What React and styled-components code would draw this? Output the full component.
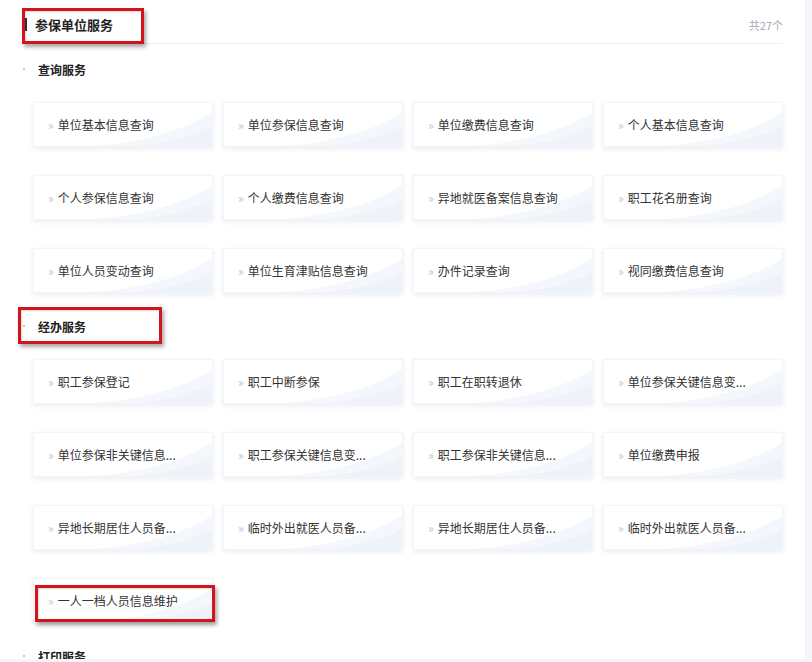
import React from 'react';
import styled, { createGlobalStyle } from 'styled-components';

const sections = [
  {
    title: '查询服务',
    items: [
      '单位基本信息查询', '单位参保信息查询', '单位缴费信息查询', '个人基本信息查询',
      '个人参保信息查询', '个人缴费信息查询', '异地就医备案信息查询', '职工花名册查询',
      '单位人员变动查询', '单位生育津贴信息查询', '办件记录查询', '视同缴费信息查询',
    ],
  },
  {
    title: '经办服务',
    marked: true,
    items: [
      '职工参保登记', '职工中断参保', '职工在职转退休', '单位参保关键信息变...',
      '单位参保非关键信息...', '职工参保关键信息变...', '职工参保非关键信息...', '单位缴费申报',
      '异地长期居住人员备...', '临时外出就医人员备...', '异地长期居住人员备...', '临时外出就医人员备...',
      '一人一档人员信息维护',
    ],
    markedItem: 12,
  },
  {
    title: '打印服务',
    items: [],
  },
];

const GlobalStyle = createGlobalStyle`
  html, body {
    margin: 0;
    padding: 0;
    background: #f4f6f9;
  }
  body {
    font-family: "Noto Sans CJK SC", "Noto Sans", sans-serif;
    color: #333;
  }
`;

const Panel = styled.div`
  width: 806px;
  height: 659px;
  overflow: hidden;
  background: #fff;
  box-sizing: border-box;
  padding: 0 22px;
  border-right: 1px solid #f0f2f5;
`;

const Header = styled.div`
  position: relative;
  display: flex;
  align-items: center;
  height: 37px;
  padding: 6px 0 0 3px;
  border-bottom: 1px solid #edf0f3;
`;

const Bar = styled.span`
  width: 2px;
  height: 13px;
  background: #2a3347;
  margin-right: 8px;
`;

const Title = styled.h2`
  margin: 0;
  font-size: 13px;
  font-weight: 700;
  color: #222;
  flex: 1;
`;

const Count = styled.span`
  font-size: 11px;
  color: #a3a8b0;
`;

const Section = styled.div`
  padding-top: 16px;
`;

const SectionTitle = styled.div`
  position: relative;
  display: flex;
  align-items: center;
  height: 18px;
  font-size: 12px;
  font-weight: 700;
  color: #222;
  &::before {
    content: '';
    width: 2px;
    height: 2px;
    background: #c4c9d0;
    margin: 0 13px 0 1px;
  }
`;

const Grid = styled.div`
  display: grid;
  grid-template-columns: repeat(4, 180px);
  gap: 28px 10px;
  margin: 24px 0 8px 11px;
`;

const Card = styled.div`
  position: relative;
  height: 45px;
  display: flex;
  align-items: center;
  padding-left: 14px;
  box-sizing: border-box;
  background: #fff;
  border: 1px solid #f2f4f7;
  box-shadow: 0 2px 5px rgba(30, 60, 110, 0.09);
  font-size: 12px;
  color: #333;
  cursor: pointer;
`;

const Wave = styled.svg`
  position: absolute;
  right: 0;
  bottom: 0;
  width: 100%;
  height: 100%;
  pointer-events: none;
`;

const Arrow = styled.span`
  position: relative;
  color: #bfc5ce;
  font-size: 12px;
  margin-right: 4px;
  line-height: 1;
`;

const Label = styled.span`
  position: relative;
  white-space: nowrap;
`;

const Mark = styled.div`
  position: absolute;
  left: ${p => p.$left}px;
  top: ${p => p.$top}px;
  width: ${p => p.$w}px;
  height: ${p => p.$h}px;
  box-sizing: border-box;
  border: 3px solid #d3141c;
  box-shadow: 2px 3px 4px rgba(0, 0, 0, 0.35), inset 1px 1px 2px rgba(0, 0, 0, 0.15);
  pointer-events: none;
`;

function ServiceCard({ name, marked }) {
  return (
    <Card>
      <Wave viewBox="0 0 180 45" preserveAspectRatio="none">
        <path d="M60 45 C105 42 150 30 180 10 L180 45 Z" fill="#f4f8fc" />
        <path d="M105 45 C140 41 165 33 180 24 L180 45 Z" fill="#eef3fa" />
      </Wave>
      <Arrow>»</Arrow>
      <Label>{name}</Label>
      {marked && <Mark $left={1} $top={6} $w={180} $h={37} />}
    </Card>
  );
}

export default function App() {
  return (
    <>
      <GlobalStyle />
      <Panel>
        <Header>
          <Bar />
          <Title>参保单位服务</Title>
          <Count>共27个</Count>
          <Mark $left={0} $top={8} $w={122} $h={36} />
        </Header>
        {sections.map(section => (
          <Section key={section.title}>
            <SectionTitle>
              {section.title}
              {section.marked && <Mark $left={-4} $top={-10} $w={144} $h={37} />}
            </SectionTitle>
            {section.items.length > 0 && (
              <Grid>
                {section.items.map((name, i) => (
                  <ServiceCard key={i} name={name} marked={section.markedItem === i} />
                ))}
              </Grid>
            )}
          </Section>
        ))}
      </Panel>
    </>
  );
}
